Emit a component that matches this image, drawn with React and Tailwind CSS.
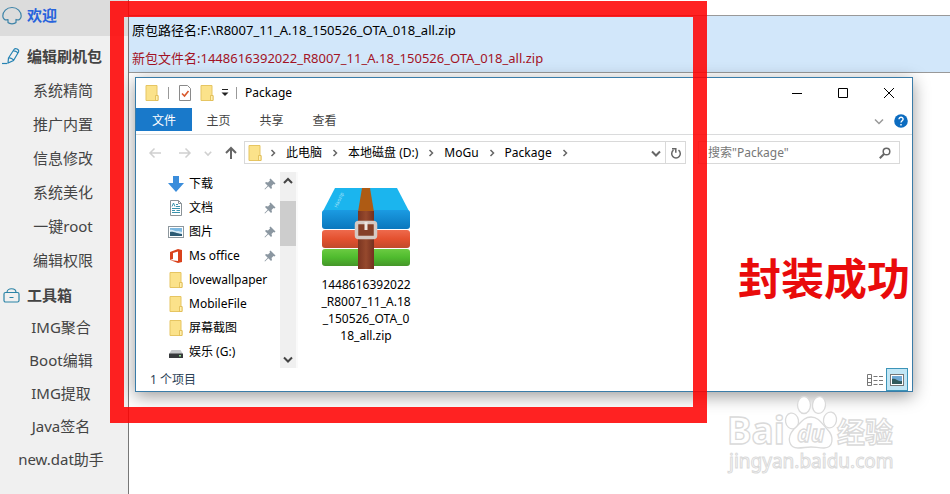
import React from "react";

const editItems = ["系统精简", "推广内置", "信息修改", "系统美化", "一键root", "编辑权限"];
const toolItems = ["IMG聚合", "Boot编辑", "IMG提取", "Java签名", "new.dat助手"];

function FolderIcon() {
  return (
    <svg className="h-4 w-4 shrink-0" viewBox="0 0 16 16" aria-hidden="true">
      <path d="M2 .5h11v10h1v5H2z" fill="#fbe28a" stroke="#e6c562" strokeWidth="1" />
      <path d="M11.500 15.500v-5h2.500v5z" fill="#fff0b0" stroke="#deb94f" strokeWidth=".8" />
    </svg>
  );
}

function DownloadIcon() {
  return (
    <svg className="h-4 w-4 shrink-0" viewBox="0 0 16 16" aria-hidden="true">
      <path d="M5 0h6v7h5l-8 9-8-9h5z" fill="#3b8ddb" />
    </svg>
  );
}

function DocumentIcon() {
  return (
    <svg className="h-4 w-4 shrink-0" viewBox="0 0 16 16" aria-hidden="true">
      <path d="M2.500 .5h8l3 3v12h-11z" fill="#fff" stroke="#8a9297" />
      <path d="M10.500 .5v3h3" fill="none" stroke="#8a9297" />
      <path d="M4 6.500 5.500 3 7 6.500M8 4.500h2M8 6.500h4M4 8.500h8M4 10.500h3M8.500 10.500H12M4 12.500h8" fill="none" stroke="#3a93ad" />
    </svg>
  );
}

function PictureIcon() {
  return (
    <svg className="h-4 w-4 shrink-0" viewBox="0 0 16 16" aria-hidden="true">
      <rect x=".5" y="2.500" width="15" height="11" fill="#fff" stroke="#8d979d" />
      <rect x="2" y="4" width="12" height="8" fill="#7db8e0" />
      <path d="M2 6c3-1 5 2 8 1l4 1v2H2z" fill="#d8ecf6" />
      <path d="M2 8c3-1 5 1 12 2v2H2z" fill="#2c5a73" />
    </svg>
  );
}

function OfficeIcon() {
  return (
    <svg className="h-4 w-4 shrink-0" viewBox="0 0 16 16" aria-hidden="true">
      <path d="M2 4 10 1l4 1v12l-4 1-8-3 8 1V3.500L5 5v6l-3 1z" fill="#d9421c" />
    </svg>
  );
}

function DriveIcon() {
  return (
    <svg className="h-4 w-4 shrink-0" viewBox="0 0 16 16" aria-hidden="true">
      <path d="M3.500 6h9L15 10H1z" fill="#c6c8ca" />
      <rect x="1" y="9.500" width="14" height="4.500" rx=".5" fill="#37393b" />
      <rect x="11" y="11" width="2" height="1.500" fill="#8fe08f" />
    </svg>
  );
}

function PinIcon() {
  return (
    <svg className="h-3 w-3 shrink-0" viewBox="0 0 12 12" aria-hidden="true">
      <path d="M6.500 .5 11.500 5.500l-1 1-1-.5-2 2 .5 2-1 1-2.700-2.700L1 11.500l-.5-.5 3.200-3.300L1 5l1-1 2 .5 2-2-.5-1z" fill="#8b97a1" />
    </svg>
  );
}

function Chevron({ className, d = "M1 3.500 5 7.500 9 3.500", width = 1.5 }) {
  return (
    <svg className={className} viewBox="0 0 10 10" fill="none" stroke="currentColor" strokeWidth={width} aria-hidden="true">
      <path d={d} />
    </svg>
  );
}

const treeItems = [
  { name: "下载", Icon: DownloadIcon, pinned: true },
  { name: "文档", Icon: DocumentIcon, pinned: true },
  { name: "图片", Icon: PictureIcon, pinned: true },
  { name: "Ms office", Icon: OfficeIcon, pinned: true },
  { name: "lovewallpaper", Icon: FolderIcon },
  { name: "MobileFile", Icon: FolderIcon },
  { name: "屏幕截图", Icon: FolderIcon },
  { name: "娱乐 (G:)", Icon: DriveIcon },
];

function ArchiveIcon() {
  return (
    <svg className="h-[82px] w-[88px]" viewBox="0 0 88 82" aria-hidden="true">
      <defs>
        <linearGradient id="blueBook" x2="0" y2="1">
          <stop offset="0" stopColor="#1b9be2" />
          <stop offset="1" stopColor="#0a77bd" />
        </linearGradient>
        <linearGradient id="redBook" x2="0" y2="1">
          <stop offset="0" stopColor="#ee6a4d" />
          <stop offset=".5" stopColor="#e4512f" />
          <stop offset="1" stopColor="#c04a2b" />
        </linearGradient>
        <linearGradient id="greenBook" x2="0" y2="1">
          <stop offset="0" stopColor="#6bcb42" />
          <stop offset=".5" stopColor="#4fbb2e" />
          <stop offset="1" stopColor="#45962a" />
        </linearGradient>
        <linearGradient id="strap">
          <stop offset="0" stopColor="#7a3521" />
          <stop offset=".5" stopColor="#96492d" />
          <stop offset="1" stopColor="#74301f" />
        </linearGradient>
      </defs>
      <path d="M13 1h62l13 25H0z" fill="#1bb5ee" />
      <rect y="23" width="88" height="19" rx="3" fill="url(#blueBook)" />
      <rect y="43" width="88" height="18" rx="3" fill="url(#redBook)" />
      <rect y="62" width="88" height="17" rx="3" fill="url(#greenBook)" />
      <path d="M40 1h8l4 24H36z" fill="#ae5b14" />
      <path d="M36 24h16v58H36z" fill="url(#strap)" />
      <rect x="34.500" y="35.500" width="19" height="15" rx="2" fill="#854029" stroke="#d5c9c4" strokeWidth="3.500" />
      <path d="M44 35v8" stroke="#eee5e0" strokeWidth="3" />
      <text x="15" y="21" fontSize="5" fontFamily="Noto Sans, sans-serif" fill="#a9e3fa" transform="rotate(-65 15 21)">Haozip</text>
    </svg>
  );
}

function Sidebar() {
  return (
    <nav className="flex w-[129px] shrink-0 flex-col border-r border-[#777] bg-[#f0f0f0] text-[15px] leading-5 text-[#444]">
      <a href="#welcome" className="flex h-9 items-center gap-[5px] bg-[#dcdcdc] pb-1.5 pl-0.5 font-bold text-[#2763dc]">
        <svg className="h-5 w-5 shrink-0" viewBox="0 0 20 20" fill="none" stroke="#3d83a8" strokeWidth="1.200" strokeLinejoin="round" aria-hidden="true">
          <path d="M6 14.500C3 16 .8 13.500 .8 11 .8 6.500 4.500 2.500 10 2.500s9.200 4 9.200 8.500c0 2.500-2.200 5-5.200 3.500v3c-1.500 1.700-6.500 1.700-8 0z" />
        </svg>
        欢迎
      </a>
      <h2 className="flex h-[37px] items-center gap-[5px] pl-0.5 pt-0.5 font-bold">
        <svg className="h-5 w-5 shrink-0" viewBox="0 0 20 20" fill="none" stroke="#2683b3" strokeWidth="1.200" aria-hidden="true">
          <path d="M6.500 12 12 3.500c1.500-2 5.500 0 4.500 2.500l-5 8.500-5.500 2.500zM6.500 12c2-.5 4.500 1 5 2.500M11 5c2-.5 4.500 1 5 2.500" />
          <path d="M0 17.500h5" />
        </svg>
        编辑刷机包
      </h2>
      <ul>
        {editItems.map((item) => (
          <li key={item}>
            <a href={"#" + item} className="flex h-[34px] items-center justify-center pr-0.5">{item}</a>
          </li>
        ))}
      </ul>
      <h2 className="flex h-[33px] items-center gap-[5px] pl-0.5 pt-0.5 font-bold">
        <svg className="h-5 w-5 shrink-0" viewBox="0 0 20 20" fill="none" stroke="#2b83a6" strokeWidth="1.200" aria-hidden="true">
          <rect x="2" y="7.500" width="15" height="9.500" rx="1.500" />
          <path d="M5 7.500c0-5 9-5 9 0M7.500 12.500h4" />
        </svg>
        工具箱
      </h2>
      <ul>
        {toolItems.map((item) => (
          <li key={item}>
            <a href={"#" + item} className="flex h-[33px] items-center justify-center pr-1.5">{item}</a>
          </li>
        ))}
      </ul>
    </nav>
  );
}

function TitleBar() {
  return (
    <header className="flex h-[30px] items-center pl-2">
      <FolderIcon />
      <span className="ml-2 h-3 w-px bg-[#999]" />
      <button type="button" aria-label="属性" className="ml-2">
        <svg className="h-4 w-4" viewBox="0 0 16 16" fill="none" aria-hidden="true">
          <path d="M2.500 .5h8l3 3v12h-11z" fill="#fff" stroke="#8a8a8a" />
          <path d="m5 8.500 2.500 2.500 4-5" stroke="#d9582b" strokeWidth="1.600" />
        </svg>
      </button>
      <button type="button" aria-label="新建文件夹" className="ml-1.5"><FolderIcon /></button>
      <button type="button" aria-label="自定义" className="ml-1.5">
        <svg className="h-2 w-2" viewBox="0 0 8 8" aria-hidden="true">
          <path d="M1 .5h6" stroke="#222" />
          <path d="M.5 3.500h7L4 7z" fill="#222" />
        </svg>
      </button>
      <span className="ml-[7px] h-3 w-px bg-[#999]" />
      <h1 className="ml-2 text-black">Package</h1>
      <div className="ml-auto flex text-black">
        <button type="button" aria-label="最小化" className="flex h-7 w-[46px] items-center justify-center">
          <svg className="h-3 w-3" viewBox="0 0 12 12" stroke="currentColor" aria-hidden="true"><path d="M1 6.500h10" /></svg>
        </button>
        <button type="button" aria-label="最大化" className="flex h-7 w-[46px] items-center justify-center">
          <svg className="h-3 w-3" viewBox="0 0 12 12" fill="none" stroke="currentColor" aria-hidden="true"><path d="M1.500 1.500h9v9h-9z" /></svg>
        </button>
        <button type="button" aria-label="关闭" className="flex h-7 w-[46px] items-center justify-center">
          <svg className="h-3 w-3" viewBox="0 0 12 12" stroke="currentColor" aria-hidden="true"><path d="m1 1 10 10M11 1 1 11" /></svg>
        </button>
      </div>
    </header>
  );
}

function Ribbon() {
  return (
    <div className="flex h-[27px] items-start border-b border-[#dadbdc] text-[#444]">
      <button type="button" className="h-[23px] w-14 bg-[#1979ca] pt-0.5 text-white">文件</button>
      <button type="button" className="h-[23px] w-[53px] pt-0.5">主页</button>
      <button type="button" className="h-[23px] w-[53px] pt-0.5">共享</button>
      <button type="button" className="h-[23px] w-[53px] pt-0.5">查看</button>
      <div className="ml-auto flex h-[26px] items-center gap-2.5 pr-1">
        <button type="button" aria-label="展开功能区"><Chevron className="h-2.5 w-2.5 text-[#999]" /></button>
        <button type="button" aria-label="帮助">
          <svg className="h-3.5 w-3.5" viewBox="0 0 14 14" aria-hidden="true">
            <circle cx="7" cy="7" r="6.800" fill="#0c6cc0" />
            <path d="M5 5.300C5 2.500 9.200 2.700 9.100 5.200 9 6.700 7 6.800 7 8.600M7 10v1.500" fill="none" stroke="#fff" strokeWidth="1.400" />
          </svg>
        </button>
      </div>
    </div>
  );
}

function Crumb({ children }) {
  return (
    <>
      <a href={"#" + children} className="whitespace-nowrap">{children}</a>
      <Chevron className="mx-2 h-2.5 w-2.5 shrink-0 text-[#666]" d="M3.500 2 6.500 5 3.500 8" />
    </>
  );
}

function AddressRow() {
  return (
    <div className="flex items-center pb-2 pl-3 pr-3 pt-1.5">
      <div className="flex w-24 shrink-0 items-center text-[#d0d0d0]">
        <button type="button" aria-label="后退">
          <svg className="h-4 w-4" viewBox="0 0 16 16" fill="none" stroke="currentColor" strokeWidth="1.500" aria-hidden="true"><path d="M13 8H2M6.500 3.500 2 8l4.500 4.500" /></svg>
        </button>
        <button type="button" aria-label="前进" className="ml-3.5">
          <svg className="h-4 w-4" viewBox="0 0 16 16" fill="none" stroke="currentColor" strokeWidth="1.500" aria-hidden="true"><path d="M1 8h11M7.500 3.500 12 8l-4.500 4.500" /></svg>
        </button>
        <button type="button" aria-label="历史" className="ml-2.5"><Chevron className="h-2 w-2" width={2} /></button>
        <button type="button" aria-label="上移" className="ml-[11px] text-[#666]">
          <svg className="h-4 w-4" viewBox="0 0 16 16" fill="none" stroke="currentColor" strokeWidth="2" aria-hidden="true"><path d="M8 14V3M3 8l5-5 5 5" /></svg>
        </button>
      </div>
      <div className="flex h-[23px] w-[442px] items-center border border-[#d9d9d9] pl-0.5 text-black">
        <FolderIcon />
        <Chevron className="ml-[5px] mr-2 h-2.5 w-2.5 shrink-0 text-[#666]" d="M3.500 2 6.500 5 3.500 8" />
        <Crumb>此电脑</Crumb>
        <Crumb>本地磁盘 (D:)</Crumb>
        <Crumb>MoGu</Crumb>
        <Crumb>Package</Crumb>
        <button type="button" aria-label="以前的位置" className="ml-auto px-1 text-[#666]"><Chevron className="h-2.5 w-2.5" width={2} /></button>
        <button type="button" aria-label="刷新" className="flex h-full w-5 items-center justify-center border-l border-[#d9d9d9] text-[#666]">
          <svg className="h-3 w-3" viewBox="0 0 12 12" fill="none" stroke="currentColor" strokeWidth="1.500" aria-hidden="true"><path d="M8.500 3.200A4.300 4.300 0 1 1 3.500 3.200M2 1.800h3.800v4" /></svg>
        </button>
      </div>
      <label className="ml-3 flex h-[23px] min-w-0 flex-1 items-center border border-[#d9d9d9] pl-[9px] pr-2">
        <input type="text" aria-label="搜索" placeholder={'搜索"Package"'} className="min-w-0 flex-1 bg-transparent outline-none placeholder:text-[#777]" />
        <svg className="h-3 w-3 shrink-0" viewBox="0 0 12 12" fill="none" stroke="#666" strokeWidth="1.500" aria-hidden="true"><circle cx="7.500" cy="4.500" r="3.300" /><path d="M5 7 .8 11.200" strokeWidth="2" /></svg>
      </label>
    </div>
  );
}

function Explorer() {
  return (
    <section className="absolute left-1.5 right-[37px] top-[77px] border border-[#3a7ca8] bg-white text-[12px] leading-4 shadow-[0_4px_16px_rgba(0,0,0,0.4)]">
      <TitleBar />
      <Ribbon />
      <AddressRow />
      <div className="flex h-[196px]">
        <ul className="w-36 shrink-0 text-black">
          {treeItems.map(({ name, Icon, pinned }) => (
            <li key={name} className="flex h-6 items-center pl-8 pr-1">
              <Icon />
              <span className="ml-[5px] flex-1 whitespace-nowrap">{name}</span>
              {pinned && <PinIcon />}
            </li>
          ))}
        </ul>
        <div className="flex w-4 shrink-0 flex-col items-center bg-[#f0f0f0] text-[#444]">
          <Chevron className="my-1 h-2.5 w-2.5 shrink-0" d="M1 7 5 3 9 7" width={2} />
          <div className="mt-[11px] h-[45px] w-full bg-[#cdcdcd]" />
          <Chevron className="mb-1 mt-auto h-2.5 w-2.5 shrink-0" width={2} />
        </div>
        <div className="flex flex-1 items-start justify-between border-l-2 border-[#fafafa] pl-4">
          <figure className="flex w-[104px] flex-col items-center pt-[15px] text-black">
            <ArchiveIcon />
            <figcaption className="mt-[7px] text-center leading-[17px]">
              1448616392022<br />_R8007_11_A.18<br />_150526_OTA_0<br />18_all.zip
            </figcaption>
          </figure>
          <strong className="pr-0.5 pt-[77px] text-[43px] font-bold leading-[60px] text-[#e90b0b]">封装成功</strong>
        </div>
      </div>
      <footer className="flex h-[23px] items-center pl-3.5 pr-1 text-[#2b4156]">
        <span>1 个项目</span>
        <div className="ml-auto flex items-center gap-[3px]">
          <button type="button" aria-label="详细信息">
            <svg className="h-4 w-4" viewBox="0 0 16 16" fill="none" stroke="#777" aria-hidden="true">
              <path d="M.5 2.500h4v11h-4zM.5 6.500h4M.5 10.500h4M6.500 4.500h4M6.500 8.500h4M6.500 12.500h4M12 4.500h4M12 8.500h4M12 12.500h4" />
            </svg>
          </button>
          <button type="button" aria-label="大图标" className="flex h-[23px] w-[22px] items-center justify-center border border-[#3c94b8] bg-[#c2e6f5]">
            <svg className="h-3 w-3.5" viewBox="0 0 14 12" aria-hidden="true">
              <rect x=".5" y=".5" width="13" height="11" fill="#fff" stroke="#777" />
              <rect x="2" y="2" width="10" height="8" fill="#6fa8d4" />
              <path d="M2 5c4-1 6 3 10 2v3H2z" fill="#315a5c" />
            </svg>
          </button>
        </div>
      </footer>
    </section>
  );
}

function Watermark() {
  return (
    <svg className="pointer-events-none absolute left-[596px] top-[388px] h-[90px] w-[180px]" viewBox="0 0 180 90" fill="#fff" stroke="#dadada" strokeWidth="1.300" fontFamily="Noto Sans, Noto Sans CJK SC, sans-serif" aria-hidden="true">
      <text x="2" y="56" fontSize="37" fontWeight="bold">Bai</text>
      <ellipse cx="67" cy="33" rx="6.500" ry="8" transform="rotate(-10 67 33)" />
      <ellipse cx="79" cy="17" rx="6.500" ry="8.500" />
      <ellipse cx="94" cy="17" rx="6.500" ry="8.500" transform="rotate(8 94 17)" />
      <ellipse cx="105" cy="32" rx="6.500" ry="8" transform="rotate(10 105 32)" />
      <path d="M86 29c8 0 11 7 16 12 8 8 6 19-3 19-6 0-8-1-13-1s-8 1-13 1c-9 0-12-10-4-19 6-5 9-12 17-12z" />
      <text x="72" y="54" fontSize="23" fontStyle="italic" fontWeight="bold">du</text>
      <text x="112" y="55" fontSize="28" fontWeight="bold" fontFamily="Noto Sans CJK SC, sans-serif">经验</text>
      <text x="4" y="80" fontSize="19" strokeWidth="1">jingyan.baidu.com</text>
    </svg>
  );
}

export default function App() {
  return (
    <div className="relative flex min-h-screen overflow-hidden bg-white font-['Noto_Sans','Noto_Sans_CJK_SC',sans-serif]">
      <Sidebar />
      <main className="relative min-w-0 flex-1 pt-[15px]">
        <div className="border-y border-[#999] bg-[#d2e7fa] pl-[3px] text-[13px] leading-7">
          <p className="text-black">原包路径名:F:\R8007_11_A.18_150526_OTA_018_all.zip</p>
          <p className="text-[#a31325]">新包文件名:1448616392022_R8007_11_A.18_150526_OTA_018_all.zip</p>
        </div>
        <Explorer />
        <Watermark />
      </main>
      <div className="pointer-events-none absolute left-[110px] top-px h-[422px] w-[597px] border-x-14 border-y-16 border-[#ff0000dd]" />
    </div>
  );
}
